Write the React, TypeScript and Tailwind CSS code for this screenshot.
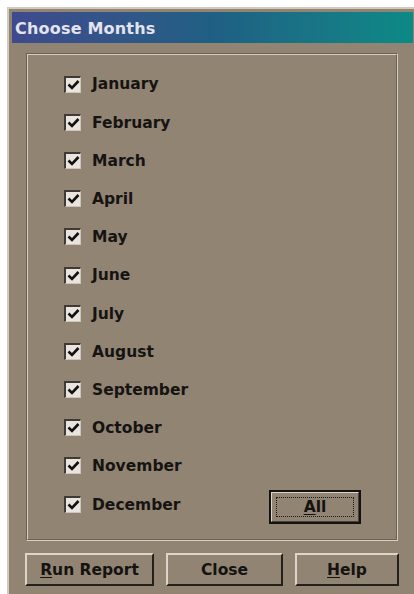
import React from 'react'

const MONTHS = [
  'January', 'February', 'March', 'April', 'May', 'June',
  'July', 'August', 'September', 'October', 'November', 'December',
]

const uiFont = { fontFamily: '"DejaVu Sans", "Liberation Sans", sans-serif' }

function CheckBox() {
  return (
    <div className="w-[17px] h-[17px] flex-shrink-0 border-t-2 border-l-2 border-[#3f3a35] border-b border-r border-b-[#cdc5b9] border-r-[#cdc5b9] bg-[#e9e5de] flex items-center justify-center">
      <svg width="13" height="12" viewBox="0 0 13 12">
        <polyline points="1.5,5.5 5,9 11.5,2" fill="none" stroke="#111" strokeWidth="2.6" strokeLinejoin="miter" />
      </svg>
    </div>
  )
}

function Mnemonic({ text, at }: { text: string; at: number }) {
  return (
    <>
      {text.slice(0, at)}
      <span className="underline underline-offset-2 decoration-1">{text[at]}</span>
      {text.slice(at + 1)}
    </>
  )
}

function PushButton({ width, children }: { width: string; children: React.ReactNode }) {
  return (
    <button
      className={`${width} h-[33px] pt-[2px] bg-[#918473] border-t-2 border-l-2 border-[#ddd5ca] border-b-2 border-r-2 border-b-[#24201c] border-r-[#24201c] text-[15.5px] font-bold text-[#151311] flex items-center justify-center`}
      style={uiFont}
    >
      {children}
    </button>
  )
}

export default function App() {
  return (
    <div className="w-[414px] h-[594px] bg-white pt-[7px] pl-[7px] overflow-hidden">
      <div className="h-full flex flex-col bg-[#918473] border-t-2 border-l-2 border-[#d2cabe] pt-[3px] pl-[3px] pr-[1px]">

        {/* title bar */}
        <div className="h-[31px] flex items-center pl-[3px] pt-[2px] bg-linear-to-r from-[#3e4a8d] via-[#1f5f84] to-[#0b8a86]">
          <span className="text-[16px] font-bold text-[#e4e4ee] tracking-[0.2px]" style={uiFont}>
            Choose Months
          </span>
        </div>

        {/* month group */}
        <div className="mt-[10px] ml-[14px] w-[372px] h-[488px] border border-t-[#6b6156] border-l-[#6b6156] border-b-[#d6cec2] border-r-[#d6cec2]">
          <div className="h-full border border-t-[#d6cec2] border-l-[#d6cec2] border-b-[#6b6156] border-r-[#6b6156] pt-[10px] pl-[36px]">
            {MONTHS.map((m, i) => (
              <div key={m} className="h-[38.2px] flex items-center">
                <CheckBox />
                <span className="ml-[11px] pt-[2px] text-[15.5px] font-bold text-[#161412]" style={uiFont}>
                  {m}
                </span>
                {i === MONTHS.length - 1 && (
                  <button
                    className="ml-auto mr-[35px] mt-[5px] w-[92px] h-[34px] border-2 border-[#141210] bg-[#918473] p-0"
                    style={uiFont}
                  >
                    <div className="h-full border-t border-l border-[#ddd5ca] border-b border-r border-b-[#4a423a] border-r-[#4a423a] p-[4px]">
                      <div className="h-full pt-[2px] border border-dotted border-[#1a1816] flex items-center justify-center text-[15.5px] font-bold text-[#151311]">
                        <Mnemonic text="All" at={0} />
                      </div>
                    </div>
                  </button>
                )}
              </div>
            ))}
          </div>
        </div>

        {/* action buttons */}
        <div className="mt-[12px] ml-[13px] flex gap-[12px]">
          <PushButton width="w-[129px]"><Mnemonic text="Run Report" at={0} /></PushButton>
          <PushButton width="w-[117px]">Close</PushButton>
          <PushButton width="w-[104px]"><Mnemonic text="Help" at={0} /></PushButton>
        </div>
      </div>
    </div>
  )
}
